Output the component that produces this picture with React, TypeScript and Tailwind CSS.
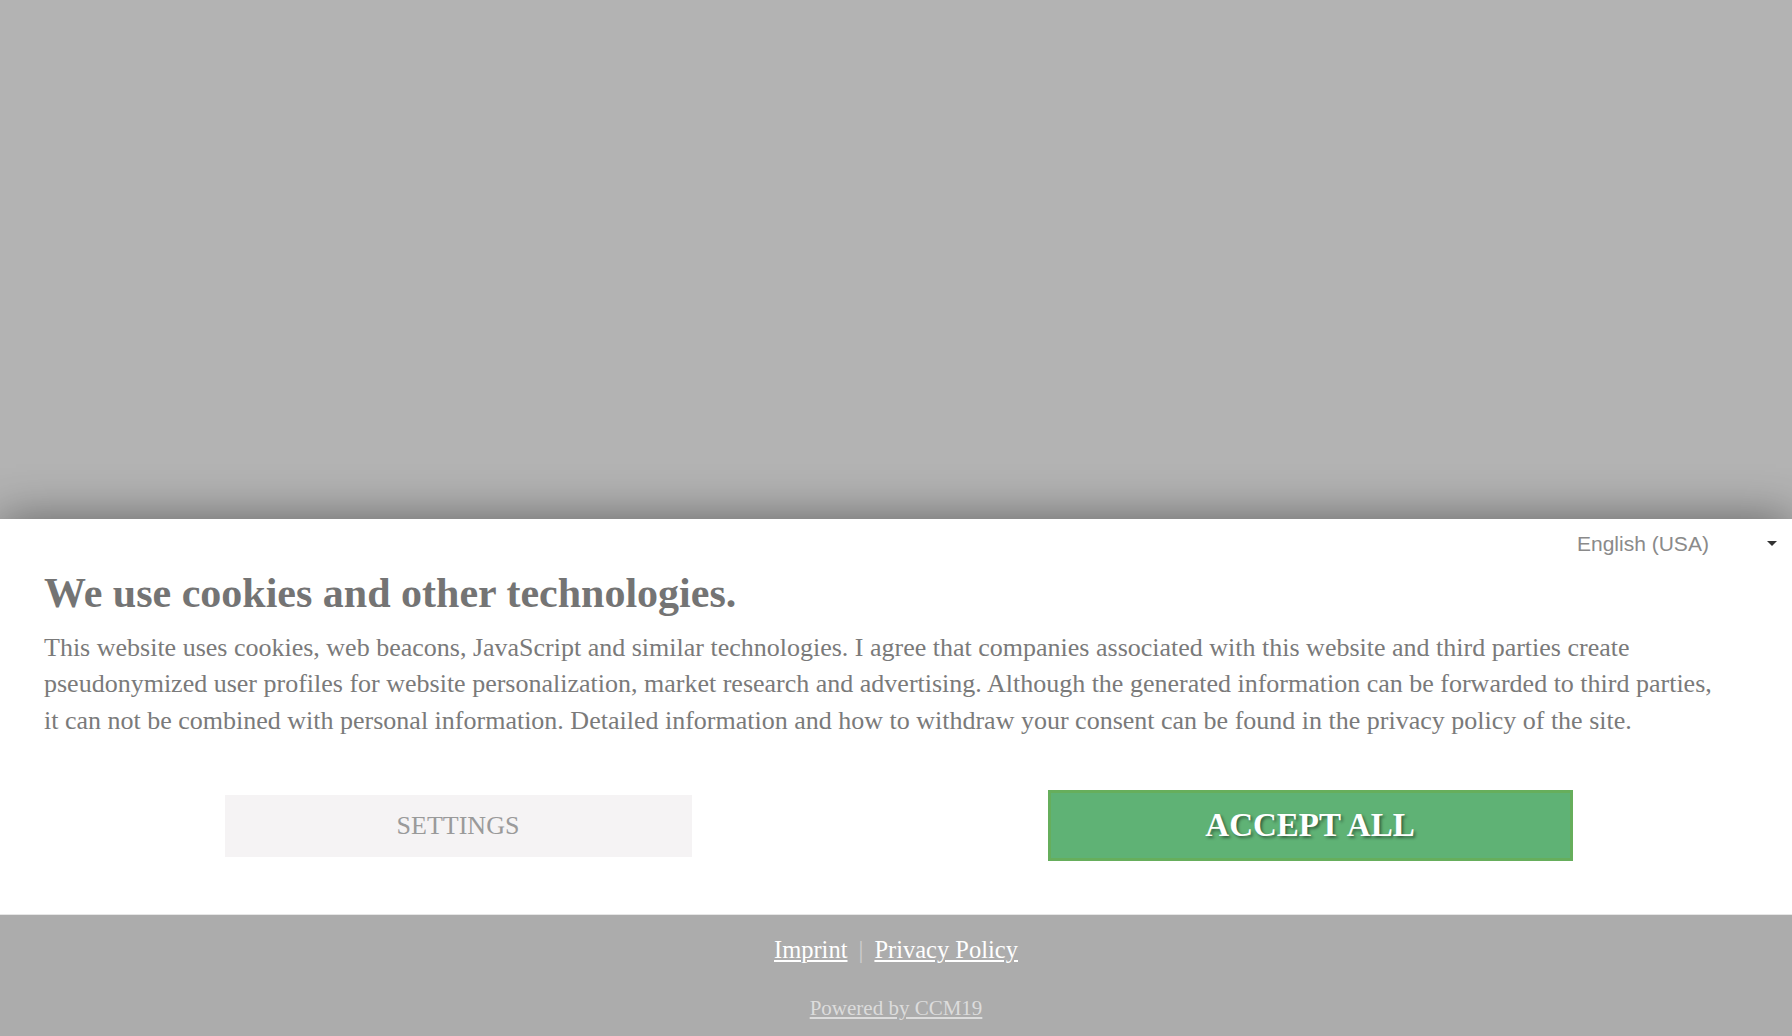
import React from 'react';

const serif = { fontFamily: '"Liberation Serif", "Times New Roman", serif' };

function LanguageSelect() {
  return (
    <div className="flex h-[50px] items-center justify-end pr-[15px]">
      <div className="flex w-[200px] items-center justify-between font-['Liberation_Sans',Arial,sans-serif] text-[21px] text-[#8a8a8a]">
        <span>English (USA)</span>
        <svg width="10" height="5" viewBox="0 0 10 5">
          <path d="M0 0 L10 0 L5 5 Z" fill="#333" />
        </svg>
      </div>
    </div>
  );
}

export default function App() {
  return (
    <div className="flex h-screen flex-col overflow-hidden bg-[#b3b3b3]" style={serif}>
      {/* backdrop */}
      <div className="flex-1" />

      {/* consent panel */}
      <div className="relative bg-white shadow-[0_0_45px_rgba(0,0,0,0.45)]">
        <LanguageSelect />
        <div className="pl-[44px] pr-[60px]">
          <h1 className="text-[42px] font-bold leading-[48px] text-[#747474]">
            We use cookies and other technologies.
          </h1>
          <p className="mt-[13px] text-[26px] leading-[36.5px] text-[#7a7a7a]">
            This website uses cookies, web beacons, JavaScript and similar technologies. I agree that companies associated with this website and third parties create pseudonymized user profiles for website personalization, market research and advertising. Although the generated information can be forwarded to third parties, it can not be combined with personal information. Detailed information and how to withdraw your consent can be found in the privacy policy of the site.
          </p>
        </div>
        <div className="mt-[51px] grid grid-cols-2 items-center pb-[53px] pl-[32px] pr-[56px]">
          <div className="flex justify-center">
            <button className="h-[62px] w-[467px] bg-[#f5f3f4] text-[26px] uppercase text-[#9a9a9a]">
              Settings
            </button>
          </div>
          <div className="flex justify-center">
            <button className="h-[71px] w-[525px] border-[3px] border-[#66ae5c] bg-[#5fb275] text-[33px] font-bold uppercase text-white [text-shadow:2px_2px_3px_rgba(0,0,0,0.45)]">
              Accept All
            </button>
          </div>
        </div>
      </div>

      {/* footer */}
      <div className="relative border-t border-[#e6e6e6] bg-[#acacac] pb-[13px] pt-[17px] text-center">
        <div className="text-[24.5px] leading-[36px]">
          <a className="text-white underline">Imprint</a>
          <span className="mx-[11px] text-[#cfcfcf]">|</span>
          <a className="text-white underline">Privacy Policy</a>
        </div>
        <div className="mt-[25px] text-[21px] leading-[30px]">
          <a className="text-[#dcdcdc] underline">Powered by CCM19</a>
        </div>
      </div>
    </div>
  );
}
